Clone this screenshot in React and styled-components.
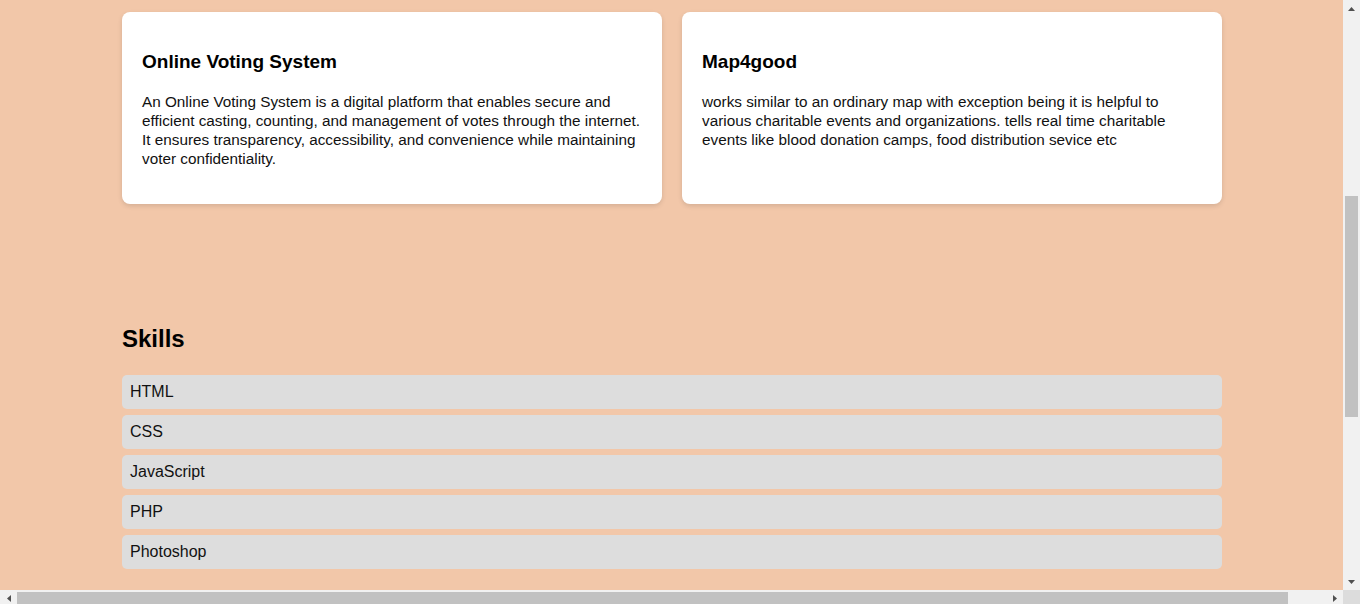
import React from 'react';
import styled, { createGlobalStyle } from 'styled-components';

const peach = '#f2c7a9';

const projects = [
  {
    title: 'Online Voting System',
    text: 'An Online Voting System is a digital platform that enables secure and efficient casting, counting, and management of votes through the internet. It ensures transparency, accessibility, and convenience while maintaining voter confidentiality.',
  },
  {
    title: 'Map4good',
    text: 'works similar to an ordinary map with exception being it is helpful to various charitable events and organizations. tells real time charitable events like blood donation camps, food distribution sevice etc',
  },
];

const skills = ['HTML', 'CSS', 'JavaScript', 'PHP', 'Photoshop'];

// scroll state of the page as captured
const scroll = { top: 179, height: 221, width: 1271 };

function Arrow({ dir }) {
  const points = {
    up: '0,4 3.5,0 7,4',
    down: '0,0 7,0 3.5,4',
    left: '4,0 4,7 0,3.5',
    right: '0,0 4,3.5 0,7',
  }[dir];
  const vertical = dir === 'up' || dir === 'down';
  return (
    <svg width={vertical ? 7 : 4} height={vertical ? 4 : 7} viewBox={vertical ? '0 0 7 4' : '0 0 4 7'}>
      <polygon points={points} fill="#505050" />
    </svg>
  );
}

export default function App() {
  return (
    <>
      <GlobalStyle />
      <Window>
        <Viewport>
          <Container>
            <ProjectGrid>
              {projects.map((p) => (
                <Card key={p.title}>
                  <CardTitle>{p.title}</CardTitle>
                  <CardText>{p.text}</CardText>
                </Card>
              ))}
            </ProjectGrid>

            <Skills>
              <SectionTitle>Skills</SectionTitle>
              <SkillList>
                {skills.map((s) => (
                  <SkillItem key={s}>{s}</SkillItem>
                ))}
              </SkillList>
            </Skills>
          </Container>
        </Viewport>

        <VScroll>
          <ScrollButton><Arrow dir="up" /></ScrollButton>
          <VTrack>
            <VThumb style={{ marginTop: scroll.top, height: scroll.height }} />
          </VTrack>
          <ScrollButton><Arrow dir="down" /></ScrollButton>
        </VScroll>

        <HScroll>
          <ScrollButton><Arrow dir="left" /></ScrollButton>
          <HTrack>
            <HThumb style={{ width: scroll.width }} />
          </HTrack>
          <ScrollButton><Arrow dir="right" /></ScrollButton>
        </HScroll>

        <Corner />
      </Window>
    </>
  );
}

// Styles
const GlobalStyle = createGlobalStyle`
  html, body {
    margin: 0;
    padding: 0;
    overflow: hidden;
    background: ${peach};
  }

  body {
    font-family: "Liberation Sans", Arial, sans-serif;
    color: #000;
  }
`;

const Window = styled.div`
  display: grid;
  grid-template-columns: 1343px 17px;
  grid-template-rows: 590px 17px;
  width: 1360px;
  height: 607px;
`;

const Viewport = styled.main`
  overflow: hidden;
  background: ${peach};
`;

const Container = styled.div`
  width: 1100px;
  margin: 0 121px 0 122px;
  padding-top: 12px;
`;

const ProjectGrid = styled.div`
  display: grid;
  grid-template-columns: 1fr 1fr;
  gap: 20px;
`;

const Card = styled.article`
  background: #fff;
  border-radius: 8px;
  padding: 20px;
  box-shadow: 0 2px 5px rgba(0, 0, 0, 0.12);
`;

const CardTitle = styled.h3`
  margin: 20px 0 20px;
  font-size: 19px;
  line-height: 20px;
  font-weight: 700;
`;

const CardText = styled.p`
  margin: 0 0 16px;
  font-size: 15.3px;
  line-height: 19px;
  color: #111;
`;

const Skills = styled.section`
  margin-top: 121px;
`;

const SectionTitle = styled.h2`
  margin: 0;
  font-size: 24px;
  line-height: 28px;
  font-weight: 700;
`;

const SkillList = styled.ul`
  list-style: none;
  margin: 22px 0 0;
  padding: 0;
`;

const SkillItem = styled.li`
  background: #ddd;
  border-radius: 5px;
  padding: 8px;
  margin-bottom: 6px;
  font-size: 16px;
  line-height: 18px;
  color: #111;
`;

const VScroll = styled.div`
  display: flex;
  flex-direction: column;
  background: #f1f1f1;
`;

const HScroll = styled.div`
  display: flex;
  background: #f1f1f1;
`;

const ScrollButton = styled.div`
  flex: 0 0 17px;
  width: 17px;
  height: 17px;
  display: flex;
  align-items: center;
  justify-content: center;
`;

const VTrack = styled.div`
  flex: 1;
  padding: 0 2px;
`;

const VThumb = styled.div`
  background: #c1c1c1;
`;

const HTrack = styled.div`
  flex: 1;
  padding: 2px 0;
`;

const HThumb = styled.div`
  height: 13px;
  background: #c1c1c1;
`;

const Corner = styled.div`
  background: #dcdcdc;
`;
